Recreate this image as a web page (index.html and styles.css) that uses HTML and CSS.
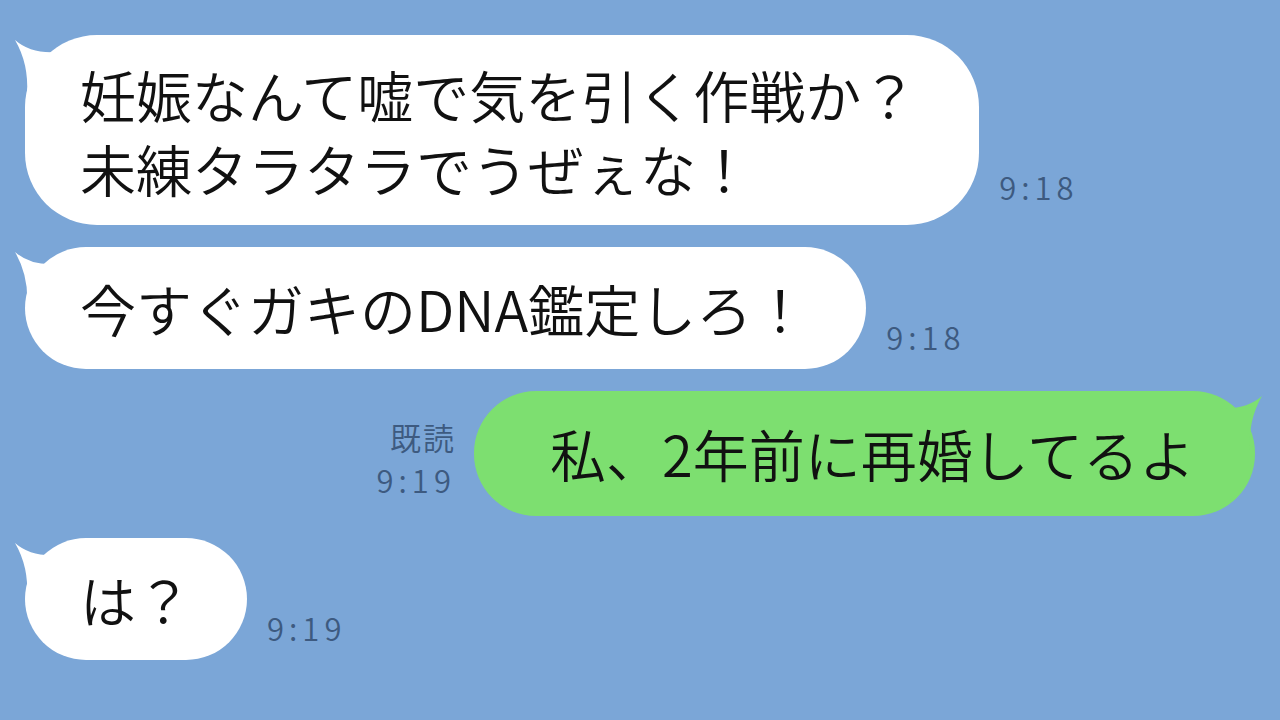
FILE: index.html
```html
<!DOCTYPE html>
<html lang="ja">
<head>
    <title>トーク</title>
    <meta charset="UTF-8">
    <meta name="viewport" content="width=device-width, initial-scale=1.0">
    <link rel="stylesheet" href="styles.css">
</head>
<body>
    <div class="chat">
        <div class="row">
            <div class="bubble tall">
                <svg class="tail" width="44" height="56" viewBox="0 0 44 56"><path d="M2 2 Q18 16 44 14 L44 56 L14 56 Q16 26 2 2 Z" fill="#fff"/></svg>
                <p>妊娠なんて嘘で気を引く作戦か？<br>未練タラタラでうぜぇな！</p>
            </div>
            <div class="meta first">9:18</div>
        </div>
        <div class="row">
            <div class="bubble">
                <svg class="tail" width="44" height="56" viewBox="0 0 44 56"><path d="M2 2 Q18 16 44 14 L44 56 L14 56 Q16 26 2 2 Z" fill="#fff"/></svg>
                <p>今すぐガキのDNA鑑定しろ！</p>
            </div>
            <div class="meta">9:18</div>
        </div>
        <div class="row mine">
            <div class="meta read">
                <span class="read-label">既読</span>
                <span>9:19</span>
            </div>
            <div class="bubble green">
                <svg class="tail-right" width="44" height="56" viewBox="0 0 44 56"><path d="M42 2 Q26 16 0 14 L0 56 L30 56 Q28 26 42 2 Z" fill="#7ddf70"/></svg>
                <p>私、2年前に再婚してるよ</p>
            </div>
        </div>
        <div class="row">
            <div class="bubble short">
                <svg class="tail" width="44" height="56" viewBox="0 0 44 56"><path d="M2 2 Q18 16 44 14 L44 56 L14 56 Q16 26 2 2 Z" fill="#fff"/></svg>
                <p>は？</p>
            </div>
            <div class="meta">9:19</div>
        </div>
    </div>
</body>
</html>
```

FILE: styles.css
```css
body {
    margin: 0;
    background-color: #7ba6d7;
    font-family: "Noto Sans CJK JP", "Noto Sans", sans-serif;
    width: 1280px;
    height: 720px;
    overflow: hidden;
}
.chat {
    display: flex;
    flex-direction: column;
    gap: 22px;
    padding: 35px 25px 0 25px;
}
.row {
    display: flex;
    align-items: flex-end;
    gap: 20px;
}
.row.mine {
    justify-content: flex-end;
}
.bubble {
    position: relative;
    background-color: #fff;
    border-radius: 62px;
    padding: 25px 58px 25px 55px;
    color: #111;
}
.bubble p {
    margin: 0;
    font-size: 56px;
    line-height: 72px;
    white-space: nowrap;
    font-weight: 350;
}
.bubble.tall {
    border-radius: 72px;
    padding: 22px 62px 20px 55px;
}
.bubble.tall p {
    line-height: 74px;
}
.bubble.short {
    padding-right: 55px;
}
.bubble.green {
    background-color: #7ddf70;
    padding: 26px 60px 27px 76px;
}
.tail {
    position: absolute;
    left: -12px;
    top: 3px;
}
.tail-right {
    position: absolute;
    right: -9px;
    top: 3px;
}
.meta {
    color: #3d5a80;
    font-size: 31px;
    font-weight: 350;
    line-height: 40px;
    letter-spacing: 5px;
    margin-bottom: 12px;
}
.meta.first {
    margin-bottom: 18px;
}
.meta.read {
    display: flex;
    flex-direction: column;
    align-items: flex-end;
    margin-bottom: 15px;
    margin-right: -2px;
    line-height: 43px;
}
.read-label {
    font-size: 31px;
    letter-spacing: 2px;
}
```
